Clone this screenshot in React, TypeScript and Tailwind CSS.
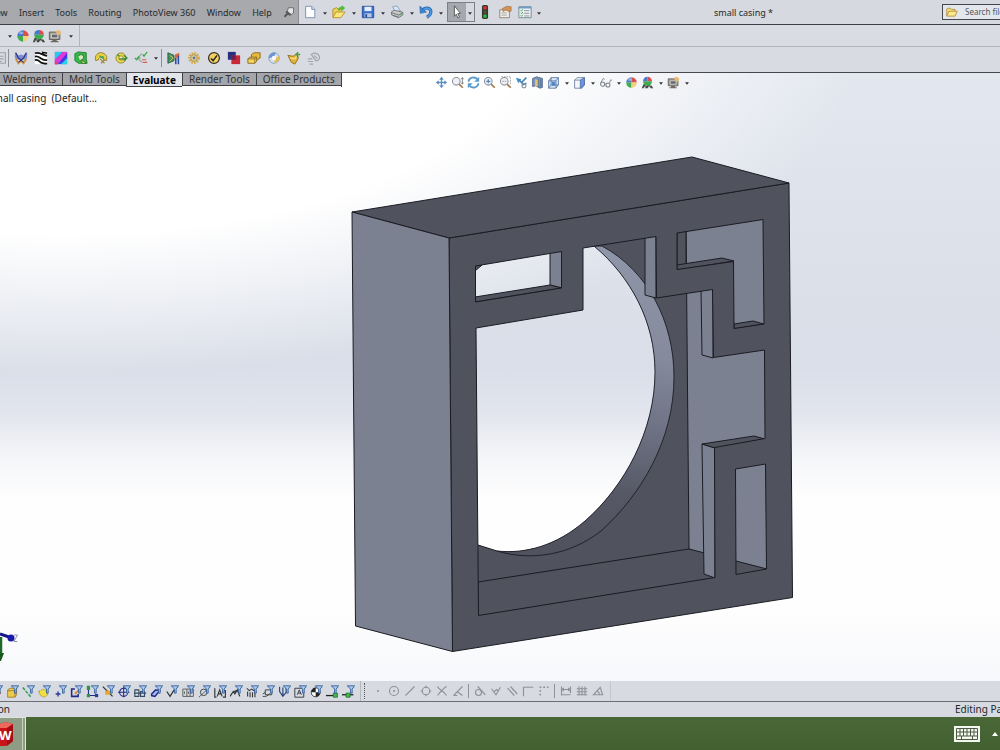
import React from 'react';
import clsx from 'clsx';

type Tool = { label: string; art: React.ReactNode };

const DARK = '#50525e';
const LIGHT = '#7c8192';
const EDGE = '#1b1c22';

const Glyph = ({ children, className = 'size-3.5' }: { children: React.ReactNode; className?: string }) => (
  <svg viewBox="0 0 16 16" className={clsx('block shrink-0', className)} fill="none" aria-hidden="true">
    {children}
  </svg>
);

const ToolButton = ({ label, art, className = 'w-4', size }: Tool & { className?: string; size?: string }) => (
  <button type="button" aria-label={label} className={clsx('flex h-4 shrink-0 items-center justify-center', className)}>
    <Glyph className={size}>{art}</Glyph>
  </button>
);

const Caret = ({ label, className = 'w-2.5' }: { label: string; className?: string }) => (
  <button type="button" aria-label={label} className={clsx('flex h-4 shrink-0 items-center justify-center', className)}>
    <svg viewBox="0 0 5 3" className="mt-0.5 h-[3px] w-1" aria-hidden="true">
      <path d="M0 0h5L2.5 3z" fill="#33353a" />
    </svg>
  </button>
);

const Divider = ({ className = 'h-4 bg-[#8d9095]' }: { className?: string }) => (
  <span className={clsx('w-px shrink-0', className)} />
);

/* ---------- icon drawings ---------- */

const ball = (
  <>
    <path d="M8 8V1.500A6.500 6.500 0 0 0 1.500 8z" fill="#4a78cc" />
    <path d="M8 8V1.500A6.500 6.500 0 0 1 14.500 8z" fill="#d94f50" />
    <path d="M8 8v6.500A6.500 6.500 0 0 1 1.500 8z" fill="#3eab50" />
    <path d="M8 8v6.500A6.500 6.500 0 0 0 14.500 8z" fill="#efd27c" />
    <ellipse cx="6" cy="4.500" rx="2.500" ry="1.600" fill="#fff" opacity=".4" />
  </>
);

const sceneBall = (
  <>
    <path d="M1 15l3-6h8l3 6z" fill="#d5d6d6" />
    <path d="M3 10h3l-1 2h2l1-2h2l1 2h2l2 3h-3l-1-2H9l-1 2H5l1-2H4l-1 2H1z" fill="#444" />
    <path d="M8 6.500V1a5.500 5.500 0 0 0-5.500 5.500z" fill="#4a78cc" />
    <path d="M8 6.500V1a5.500 5.500 0 0 1 5.500 5.500z" fill="#d94f50" />
    <path d="M2.500 6.500h11a5.500 5.500 0 0 1-11 0z" fill="#3eab50" />
  </>
);

const monitor = (
  <>
    <path d="M1.500 3.500h12v8.500h-12z" fill="#a3a29e" stroke="#5b5650" />
    <path d="M4 6h7v4H4z" fill="#666" stroke="#eee" strokeWidth=".7" />
    <path d="M3 14.500h9M5 13h5" stroke="#6f6a64" strokeWidth="1.400" />
    <path d="M8 2.500l4-1.500 3 2-1 4-3-1z" fill="#e9b873" />
  </>
);

const folder = (
  <>
    <path d="M1 13V4l1-1h4l1.500 1.500H12V7" fill="#f5dc79" stroke="#a8822c" />
    <path d="M1 13.500L4 7h11l-3 6.500z" fill="#fbe98f" stroke="#a8822c" />
  </>
);

const fileTools: Tool[] = [
  {
    label: 'New',
    art: (
      <>
        <path d="M3 1.500h7l3.500 3.500v9.500H3z" fill="#fdfeff" stroke="#7189ab" />
        <path d="M10 1.500V5h3.500" stroke="#7189ab" fill="#c9dbf2" />
      </>
    ),
  },
  {
    label: 'Open',
    art: (
      <>
        <path d="M1 14V5l4-2 2 1.500h4V7" fill="#f0cf55" stroke="#b58d2c" />
        <path d="M1 14.500L4.500 8H15l-5 6.500z" fill="#fbe77c" stroke="#b58d2c" />
        <path d="M7 6c0-3 2-4 4-4V0l4 3.500L11 7V4.500C9.500 4.500 9 5 8.500 7z" fill="#4dbb3d" />
      </>
    ),
  },
  {
    label: 'Save',
    art: (
      <>
        <path d="M1.500 1.500h13v13h-13z" fill="#3970cd" stroke="#234c9a" />
        <path d="M4 2h8v5H4z" fill="#e6eefb" />
        <path d="M4 9.500h8V14H4z" fill="#b9c9e3" />
        <path d="M5 10.500h2V14H5z" fill="#27488a" />
      </>
    ),
  },
  {
    label: 'Print',
    art: (
      <>
        <path d="M3 2l5-1 4 6-6 1z" fill="#d5e8fb" stroke="#7d8ea3" strokeWidth=".8" />
        <path d="M1.500 8L5 6l9 2 1 3-5 3.500-8-3z" fill="#c6c8c9" stroke="#5f6366" strokeWidth=".9" />
        <path d="M2 9l8 2.500 5-3M4 12l6 2" stroke="#6a6e71" />
        <path d="M11 11.500l2-1" stroke="#4aa64a" strokeWidth="1.400" />
      </>
    ),
  },
  {
    label: 'Undo',
    art: (
      <>
        <path d="M4 5.500c5-4 10-1.500 9.500 3-.4 3-2.500 4.500-4.500 5.500" stroke="#1d5ca8" strokeWidth="3.600" />
        <path d="M4 5.500c5-4 10-1.500 9.500 3-.4 3-2.500 4.500-4.500 5.500" stroke="#4f9be3" strokeWidth="2" />
        <path d="M1 1.500l.5 8 7-1.500z" fill="#3c86d4" stroke="#1d5ca8" strokeWidth=".7" />
      </>
    ),
  },
];

const pointerArt = (
  <path d="M5 1l7 8.500-3.200.3 2 4-1.800 1-1.900-4.200L5 13z" fill="#fff" stroke="#444" strokeWidth=".9" />
);

const trailingTools: Tool[] = [
  {
    label: 'Rebuild',
    art: (
      <>
        <rect x="4.500" y="0" width="7" height="16" rx="2" fill="#333a33" />
        <circle cx="8" cy="3.200" r="2.200" fill="#de3030" />
        <circle cx="8" cy="8" r="1.800" fill="#5c5430" />
        <circle cx="8" cy="12.700" r="2.200" fill="#2fb53c" />
      </>
    ),
  },
  {
    label: 'File properties',
    art: (
      <>
        <path d="M2 5.500h11v9H2z" fill="#f1eee9" stroke="#8b7e70" />
        <path d="M4 9h6M4 11.500h6" stroke="#9b9b9b" />
        <path d="M5 4l5-2.500 5 .5v5l-3 .500-3-2-3 2z" fill="#d29356" stroke="#8f5f34" strokeWidth=".6" />
      </>
    ),
  },
  {
    label: 'Options',
    art: (
      <>
        <path d="M1 2h14v12.500H1z" fill="#eef2f5" stroke="#6b8293" />
        <path d="M1 3h14" stroke="#6d9cc7" strokeWidth="2" />
        <path d="M7 6.500h6M7 9.500h6M7 12.500h6" stroke="#7b8790" />
        <path d="M3 6l1 1 1.500-2M3 9l1 1 1.500-2M3 12l1 1 1.500-2" stroke="#309645" />
      </>
    ),
  },
];

const evaluateTools: Tool[] = [
  {
    label: 'Measure',
    art: (
      <>
        <path d="M1 1l4 4 3-1 3 1 4-4v7l-3 2H4L1 8z" fill="#7f8ccf" />
        <path d="M2 9l3 5 3-3 3 3 3-5" stroke="#d48c35" strokeWidth="2" />
        <path d="M2 2l3 6 6 5M14 2l-3 6-6 5" stroke="#26307b" strokeWidth="1.300" />
      </>
    ),
  },
  {
    label: 'Zebra stripes',
    art: (
      <>
        <path d="M1 1h14v14H1z" fill="#fff" />
        <path
          d="M1 2.500c5-2 8 2 14 3M1 6.500c3-1 4 0 7 2s5 2 7 2M1 10.500c3-1 4 0 6 2s5 2 8 2M9 1.500c2 0 4 1 6 1"
          stroke="#111"
          strokeWidth="2"
        />
      </>
    ),
  },
  {
    label: 'Curvature',
    art: (
      <>
        <path d="M1 1h14v14H1z" fill="#2c54e6" />
        <path d="M1 1h9L1 10z" fill="#27c8ec" />
        <path d="M10 1h5v2L4 15H1v-5z" fill="#df38d8" />
        <path d="M15 2v7l-5 4-3-1z" fill="#4a35e8" />
        <path d="M15 8v7H8z" fill="#28d4e4" />
        <path d="M1 11v4h4z" fill="#ec3f54" />
      </>
    ),
  },
  {
    label: 'Draft analysis',
    art: (
      <>
        <path d="M1 3l4-2 9 1v7l1 5H5L1 11z" fill="#36b548" stroke="#1b7d31" />
        <path d="M5 6c2-3 6-2 6 1s-3 3-4 4" fill="#d9e7c0" stroke="#1d6e2c" />
        <path d="M9 10l5 4H9z" fill="#f0d94e" stroke="#237a33" />
      </>
    ),
  },
  {
    label: 'Undercut analysis',
    art: (
      <>
        <path d="M2 11C0 5 5 1 9 2s7 4 5 9l-3-1c0-3-5-5-6 0z" fill="#e9cf43" stroke="#8b7a22" />
        <path d="M5 5l6 1 1 4-4-2z" fill="#49a950" />
        <path d="M7 9l5 5M12 10l-4 4" stroke="#a48735" strokeWidth="1.300" />
      </>
    ),
  },
  {
    label: 'Parting line analysis',
    art: (
      <>
        <circle cx="8" cy="8" r="5.800" fill="#edd84b" stroke="#93832a" />
        <circle cx="8" cy="8" r="2.500" fill="#f8efa4" stroke="#93832a" />
        <path d="M6 9h6l3-1M11 5l4 3-4 3M4 4l2 2" stroke="#2c8743" strokeWidth="1.400" />
      </>
    ),
  },
  {
    label: 'Geometry check',
    art: (
      <>
        <path d="M9 3L4 8l5 5M3 8h5" stroke="#8fa296" strokeWidth="1.200" />
        <path d="M10 4l1.500 2L15 1M1 8l2 2 3-4" stroke="#3dac4b" strokeWidth="1.500" />
        <path d="M9 10h5M10 13h5" stroke="#cf6058" strokeWidth="1.300" />
      </>
    ),
  },
];

const analysisTools: Tool[] = [
  {
    label: 'Import diagnostics',
    art: (
      <>
        <path d="M1 2l7 3v6l-7 3z" fill="#3f8f60" stroke="#285c48" />
        <path d="M9 4l5-2v4l-5 3z" fill="#dc6a43" />
        <path d="M10 8v7M13 5v10" stroke="#2e4f9d" strokeWidth="1.800" />
        <path d="M3 5l4 3-4 4" stroke="#eccd4d" />
      </>
    ),
  },
  {
    label: 'Gear mates',
    art: (
      <>
        <circle cx="8" cy="8" r="5.500" stroke="#d9a93f" strokeWidth="2.500" strokeDasharray="2 1.200" />
        <circle cx="8" cy="8" r="3.800" fill="#e9d58c" stroke="#9b8344" />
        <circle cx="8" cy="8" r="1.700" fill="#5979b5" />
      </>
    ),
  },
  {
    label: 'Check',
    art: (
      <>
        <circle cx="8" cy="8" r="6.200" fill="#f3cf5f" stroke="#322e25" strokeWidth="1.400" />
        <path d="M4.500 8.500l2.500 2.500 4.500-6" stroke="#222" strokeWidth="1.700" />
      </>
    ),
  },
  {
    label: 'Compare documents',
    art: (
      <>
        <path d="M1 1h9v9H1z" fill="#26307f" />
        <path d="M5 5h10v10H5z" fill="#c7293a" />
        <path d="M5 5h5v5H5z" fill="#6e1d4c" />
      </>
    ),
  },
  {
    label: 'Mass properties',
    art: (
      <>
        <path d="M5 4l3-2h7v6l-3 2H5z" fill="#e8b93b" stroke="#86651c" />
        <path d="M1 9l2-2h8v5l-2 2H1z" fill="#f6d764" stroke="#86651c" />
        <path d="M1 9h8l2-2M9 9v5" stroke="#86651c" />
      </>
    ),
  },
  {
    label: 'Sensor',
    art: (
      <>
        <circle cx="8" cy="8" r="6" fill="#d6e1ec" stroke="#7f9bb9" />
        <path d="M2 8c0-4 4-7 8-6L8 7z" fill="#6b96d3" />
        <path d="M8 8l6-2c1 4-2 7-5 8z" fill="#e8bd54" />
        <circle cx="8" cy="8" r="2.500" fill="#f8fafc" />
      </>
    ),
  },
  {
    label: 'Statistics',
    art: (
      <>
        <path d="M1 5l6 1 4-3 2 5-4 7-4-2z" fill="#e5b334" stroke="#8d6a1b" />
        <path d="M4 8l5 1 2-3" stroke="#f9e48f" strokeWidth="1.500" />
        <path d="M12 1v6M9.500 4h5.500" stroke="#3da148" strokeWidth="1.600" />
      </>
    ),
  },
  {
    label: 'Deviation analysis',
    art: (
      <>
        <path d="M5 4c3-3 8-1 9 2s-1 6-4 5l-3-4z" stroke="#a3a5a8" strokeWidth="1.400" />
        <path d="M1 9h5M1 12h6M3 15h4M8 5l4 4" stroke="#a3a5a8" strokeWidth="1.300" />
      </>
    ),
  },
];

const lens = (extra: React.ReactNode) => (
  <>
    <circle cx="6.500" cy="6.500" r="4.700" fill="#edf1f5" stroke="#8b929a" strokeWidth="1.300" />
    <path d="M10 10l4.500 4.500" stroke="#a3774d" strokeWidth="2" />
    {extra}
  </>
);

const viewTools: (Tool & { menu?: boolean })[] = [
  {
    label: 'Pan',
    art: (
      <>
        <path d="M8 3v10M3 8h10" stroke="#5d8fbf" strokeWidth="1.600" />
        <path
          d="M8 1l2.800 3.500H5.200zM8 15l2.800-3.500H5.200zM1 8l3.500-2.800v5.600zM15 8l-3.500-2.800v5.600z"
          fill="#5d8fbf"
        />
      </>
    ),
  },
  {
    label: 'Zoom in and out',
    art: lens(<path d="M14 2v8M12.500 4L14 2l1.500 2M12.500 8l1.500 2 1.500-2" stroke="#6c7379" />),
  },
  {
    label: 'Rotate view',
    art: (
      <>
        <path d="M2 7c0-5 7-7 11-3M14 9c0 5-7 7-11 3" stroke="#5f9ccc" strokeWidth="2.200" />
        <path d="M15 1v6H9zM1 15V9h6z" fill="#5f9ccc" />
      </>
    ),
  },
  { label: 'Zoom to fit', art: lens(<path d="M6.500 4v5M4 6.500h5" stroke="#5587b8" strokeWidth="1.500" />) },
  { label: 'Zoom to area', art: lens(<path d="M3 1h11v10M4 6.500h5" stroke="#8b929a" strokeDasharray="2 1" />) },
  {
    label: 'Previous view',
    art: (
      <>
        <path d="M1 2l7 2-4 5z" fill="#4b93c8" />
        <path d="M4 4l6 6M8 8l6-6M9 11l5-2" stroke="#4784b7" strokeWidth="2" />
        <circle cx="11" cy="12" r="2.500" stroke="#8b929a" strokeWidth="1.300" />
      </>
    ),
  },
  {
    label: 'Section view',
    art: (
      <>
        <path d="M2 3l5-2 7 2v11l-3 1-5-3-4 1z" fill="#7894bb" stroke="#4b6288" />
        <path d="M5 4l4 1v8l-4-1z" fill="#e7c26c" />
        <path d="M9 4v10M12 4v10" stroke="#4e6892" />
      </>
    ),
  },
  {
    label: 'View orientation',
    menu: true,
    art: (
      <>
        <path d="M2 6l3-4h9v9l-3 4H2z" fill="#dce7f5" stroke="#4f6fa0" />
        <path d="M2 6h9v9M11 6l3-4M5 2v9h9M5 11l-3 4" stroke="#4f6fa0" />
        <path d="M6 7h4v5H6z" fill="#4f86c4" />
      </>
    ),
  },
  {
    label: 'Display style',
    menu: true,
    art: (
      <>
        <path d="M2 5l3-3h9v9l-3 4H2z" fill="#f3f6fb" stroke="#65799d" />
        <path d="M9 5l5-3v9l-5 4z" fill="#6d95dc" stroke="#4b69a5" />
        <path d="M2 5h7" stroke="#65799d" />
      </>
    ),
  },
  {
    label: 'Hide and show items',
    menu: true,
    art: (
      <>
        <circle cx="4.500" cy="10" r="2.500" stroke="#7e848a" strokeWidth="1.300" />
        <circle cx="11" cy="11" r="2.500" stroke="#7e848a" strokeWidth="1.300" />
        <path d="M2 9l3-6 2 1M13 9l1-4h2M7 10h1.500" stroke="#7e848a" strokeWidth="1.100" />
      </>
    ),
  },
  { label: 'Edit appearance', art: ball },
  { label: 'Apply scene', menu: true, art: sceneBall },
  { label: 'View settings', menu: true, art: monitor },
];

const filterTools: Tool[] = [
  { label: 'Filter faces', art: <path d="M8 6l5 5M8 13l5-4" stroke="#c65a33" strokeWidth="2" /> },
  {
    label: 'Filter solid bodies',
    art: (
      <>
        <path d="M2 6l3-2h8v8l-2 3H2z" fill="#efcb4c" stroke="#96782a" />
        <path d="M2 7h9v8M11 7l2-3" stroke="#96782a" />
      </>
    ),
  },
  { label: 'Filter axes', art: <path d="M1 3l10 12" stroke="#2e9a4b" strokeWidth="1.800" strokeDasharray="4 1.500" /> },
  {
    label: 'Filter planes',
    art: <path d="M1 8l5-3 5 2 1 5-4 3-5-2z" fill="#f0df3f" stroke="#99892b" strokeDasharray="2 1" />,
  },
  { label: 'Filter sketch points', art: <path d="M5 8v6M2 11h6" stroke="#2a3b9c" strokeWidth="1.700" /> },
  {
    label: 'Filter sketch segments',
    art: (
      <>
        <path d="M6 5H2v9h8v-3" stroke="#20298c" strokeWidth="1.900" />
        <path d="M6 11l5-5" stroke="#dc8a2d" strokeWidth="2.400" />
      </>
    ),
  },
  {
    label: 'Filter coordinate systems',
    art: (
      <>
        <path d="M3 2v11h10" stroke="#20298c" strokeWidth="1.300" />
        <path d="M1 1h4v5H1zM1 11h4v4H1z" fill="#2f9349" />
        <path d="M11 11h4v4h-4z" fill="#2a3b9c" />
      </>
    ),
  },
  {
    label: 'Filter midpoints',
    art: (
      <>
        <path d="M1 2l12 12" stroke="#333" strokeWidth="1.500" />
        <path d="M4 7h6v5H4z" fill="#e4a62b" />
      </>
    ),
  },
  {
    label: 'Filter center marks',
    art: (
      <>
        <circle cx="7" cy="9" r="5" stroke="#20298c" strokeWidth="1.300" />
        <path d="M7 2v13M0 9h14" stroke="#20298c" strokeWidth="1.300" />
      </>
    ),
  },
  { label: 'Filter centerlines', art: <path d="M1 6h5v8H1zM8 8h5v6H8zM0 10h15" stroke="#33495d" strokeWidth="1.300" /> },
  { label: 'Filter dimensions', art: <path d="M2 11l5-5 5 1-6 7-4-1z" fill="#a8bbec" stroke="#20298c" strokeWidth="1.800" /> },
  { label: 'Filter surface finish', art: <path d="M1 8l4 6 5-8" stroke="#333" strokeWidth="1.500" /> },
  { label: 'Filter geometric tolerances', art: <path d="M1 5h13v9H1zM6 5v9M10 5v9M3 8v3M8 8v3" stroke="#555" strokeWidth="1.100" /> },
  {
    label: 'Filter notes',
    art: (
      <>
        <circle cx="7" cy="9" r="4" stroke="#444" strokeWidth="1.200" />
        <path d="M1 15L12 5" stroke="#444" />
      </>
    ),
  },
  {
    label: 'Filter datum features',
    art: <path d="M1 4v11h2M12 7h2v8h-3M4 14l3-8 3 8M5 11h4" stroke="#333" strokeWidth="1.400" />,
  },
  { label: 'Filter weld symbols', art: <path d="M0 14l4-6 2 3 3-5 3 8M5 8l3-1" stroke="#333" strokeWidth="1.500" /> },
  { label: 'Filter weld beads', art: <path d="M1 4l3 3 3-2 6 4M2 8v6M5 9v6M8 9v6M11 9v6" stroke="#333" strokeWidth="1.300" /> },
  {
    label: 'Filter datum targets',
    art: (
      <>
        <path d="M4 6h8v6H4z" stroke="#444" strokeWidth="1.200" />
        <path d="M1 14c3 1 7-1 9-4M1 11l3-2" stroke="#444" strokeWidth="1.200" />
      </>
    ),
  },
  { label: 'Filter cosmetic threads', art: <path d="M2 2v6l4 6 4-5V3M6 3v10" stroke="#2a3f78" strokeWidth="1.400" /> },
  {
    label: 'Filter blocks',
    art: <path d="M1 4h11v11H1zM4 12l2.500-6L9 12M5 10h3" stroke="#3b4046" strokeWidth="1.200" />,
  },
  {
    label: 'Filter center of mass',
    art: (
      <>
        <circle cx="7" cy="9" r="5.500" fill="#fff" stroke="#222" />
        <path d="M7 9V3.500A5.500 5.500 0 0 0 1.500 9zM7 9v5.500A5.500 5.500 0 0 0 12.500 9z" fill="#222" />
      </>
    ),
  },
  {
    label: 'Filter connection points',
    art: (
      <>
        <path d="M0 13h9" stroke="#222" strokeWidth="1.600" />
        <path d="M9 10h5v5H9z" fill="#42b850" stroke="#1f6b2b" />
      </>
    ),
  },
  {
    label: 'Filter routing points',
    art: (
      <>
        <path d="M0 12h14" stroke="#222" strokeWidth="1.600" />
        <path d="M5 10h5v5H5z" fill="#42b850" stroke="#1f6b2b" />
      </>
    ),
  },
];

const Funnel = () => (
  <path d="M6.500 1h9L12.500 5v5h-2V5z" fill="#a9c9ec" stroke="#315f9c" strokeWidth="1.100" />
);

const g = { stroke: '#8f9296', strokeWidth: 1.5 };

const snapGroups: Tool[][] = [
  [
    { label: 'Point snap', art: <circle cx="8" cy="8" r="1.400" fill="#8f9296" /> },
    {
      label: 'Center point snap',
      art: (
        <>
          <circle cx="8" cy="8" r="6" {...g} />
          <circle cx="8" cy="8" r="1.400" fill="#8f9296" />
        </>
      ),
    },
    { label: 'Midpoint snap', art: <path d="M2 14L14 2" {...g} /> },
    {
      label: 'Quadrant snap',
      art: (
        <>
          <circle cx="8" cy="8" r="5" {...g} />
          <path d="M8 1v3M8 12v3M1 8h3M12 8h3" {...g} />
        </>
      ),
    },
    { label: 'Intersection snap', art: <path d="M2 2c2 5 8 5 12 12M14 2C9 5 6 9 2 14" {...g} /> },
    { label: 'Nearest snap', art: <path d="M2 14L14 2M7 9l7 5M2 14h5" {...g} /> },
  ],
  [
    {
      label: 'Tangent snap',
      art: (
        <>
          <circle cx="6" cy="10" r="4" {...g} />
          <path d="M5 2l10 11" {...g} />
        </>
      ),
    },
    { label: 'Perpendicular snap', art: <path d="M2 5l6 8 6-10M5 9l4-3 2 2" {...g} /> },
    { label: 'Parallel snap', art: <path d="M2 4l9 10M6 2l9 10" {...g} /> },
    { label: 'Horizontal and vertical snap', art: <path d="M2 15V3h13" {...g} /> },
    { label: 'Point alignment snap', art: <path d="M3 14V3h11" {...g} strokeWidth={2} strokeDasharray="2.500 2.500" /> },
  ],
  [
    { label: 'Length snap', art: <path d="M2 2v12M14 2v9M2 6h12M2 13h12M5 4L3 6l2 2M11 4l2 2-2 2" {...g} /> },
    { label: 'Grid snap', art: <path d="M4 2v12M8 2v12M12 2v12M1 5h14M1 9h14M1 13h14" {...g} /> },
    { label: 'Angle snap', art: <path d="M15 13H2L11 3l3 10M10 13c0-3-1-4-3-5" {...g} /> },
  ],
];

/* ---------- model ---------- */

const Casing = () => (
  <svg
    viewBox="0 73 1000 608"
    className="absolute inset-0 h-full w-full"
    fill="none"
    stroke={EDGE}
    strokeLinejoin="round"
    role="img"
    aria-label="Isometric view of the small casing part"
  >
    <defs>
      <linearGradient id="bore" x1="620" y1="246" x2="585" y2="550" gradientUnits="userSpaceOnUse">
        <stop offset="0" stopColor="#9096a9" />
        <stop offset=".35" stopColor="#858a9d" />
        <stop offset=".6" stopColor="#6c7082" />
        <stop offset=".8" stopColor="#565965" />
        <stop offset="1" stopColor={DARK} />
      </linearGradient>
    </defs>

    {/* rear wall, open where the bore passes through */}
    <path
      d="M594 246C631 277 655 322 655 372C655 430 625 486 585 521C556 546 525 554 497 551L478 545V616L689 580V225L594 240z"
      fill={DARK}
      stroke="none"
    />
    {/* bore */}
    <path
      d="M594 246C631 277 655 322 655 372C655 430 625 486 585 521C556 546 525 554 497 551C530 561 569 556 601 531C641 495 674 440 674 377C674 322 648 271 602 246z"
      fill="url(#bore)"
      strokeWidth=".9"
    />
    <path d="M497 551L478 545" />

    {/* right wall and floor */}
    <path d="M686 225L770 212V585L689 549z" fill={LIGHT} />
    <path d="M478 582L689 549L767 569L716 590L478 620z" fill={DARK} />

    {/* rib sides */}
    <g fill={LIGHT}>
      <path d="M645 236L656 234V298L645 295z" />
      <path d="M701 288L713 286V358L702 355z" />
      <path d="M702 444L715 448V578L704 574z" />
      <path d="M550 250L562 248V288L550 285z" />
    </g>
    <g fill={DARK}>
      <path d="M702 444L754 436L765 439L715 448z" />
      <path d="M677 228L686 227V266L677 268z" />
      <path d="M677 265L722 258L734 261L677 270z" />
      <path d="M734 324L753 321L764 324L734 329z" />
      <path d="M475 297L550 285L562 288L475 302z" />
      <path d="M475 265H482L475 271z" />
    </g>

    {/* front plate with its cut-outs */}
    <path
      fillRule="evenodd"
      fill={DARK}
      d="M449 238L789 183L792.500 597.500L452.500 651.500z
        M475.500 266L561.500 251.500V288L475.500 302z
        M476 328L583 310V248L656 236.500L656.500 298L712.500 289.500L713.500 357.500L764.500 350L765 438.500L714.500 447.500L715 577.500L478.500 615.500z
        M677 233L763 219.500L764 324L734 328.500L733.500 261.500L677 269.500z
        M735.500 469L765.500 464L766.500 569L736 574.500z"
    />
    <path d="M352 212L692 157L789 183L449 238z" fill={DARK} />
    <path d="M352 212L449 238L452.500 651.500L355.500 626z" fill={LIGHT} />

    {/* axis triad */}
    <path d="M0 634L12 638" stroke="#14148c" strokeWidth="3" />
    <circle cx="11" cy="638" r="3.500" fill="#1a1aa8" stroke="none" />
    <path d="M14 635h3.500l-3.500 6.500h3.500" stroke="#7c7c9c" strokeWidth=".8" />
    <path d="M1 637V654" stroke="#1c6a28" strokeWidth="2.500" />
    <path d="M0 653h4L1 661H0z" fill="#17591f" stroke="none" />
  </svg>
);

/* ---------- bars ---------- */

const menus = ['View', 'Insert', 'Tools', 'Routing', 'PhotoView 360', 'Window', 'Help'];
const tabs = ['Weldments', 'Mold Tools', 'Evaluate', 'Render Tools', 'Office Products'];

const MenuBar = () => (
  <header className="flex h-[25px] items-stretch overflow-hidden border-b border-[#3d3f45] bg-[#d6d9df]">
    <nav className="flex w-[299px] shrink-0 items-center justify-between overflow-hidden border-r border-[#8b8d91] bg-[#a7a9ac] pr-[3px] pt-0.5 text-[9px] text-[#26282c]">
      {menus.map((menu, i) => (
        <button key={menu} type="button" className={clsx('whitespace-nowrap', i === 0 && '-ml-3')}>
          {menu}
        </button>
      ))}
      <button type="button" aria-label="Pin menu">
        <Glyph className="size-3">
          <path d="M7 1h7v7l-3 2-5-4z" fill="#e5e6e8" stroke="#55575b" />
          <path d="M4 6l6 5M6 9l-4 4" stroke="#55575b" strokeWidth="2.500" />
        </Glyph>
      </button>
    </nav>

    <div className="flex items-center pl-[3px]">
      {fileTools.map((tool) => (
        <React.Fragment key={tool.label}>
          <ToolButton {...tool} />
          <Caret label={`${tool.label} menu`} className="w-[13px]" />
        </React.Fragment>
      ))}
      <div className="flex h-5 items-center border border-[#7c7f84]">
        <button type="button" aria-label="Select" className="flex h-full w-[18px] items-center justify-center bg-[#a5a8ad]">
          <Glyph className="size-3.5">{pointerArt}</Glyph>
        </button>
        <Caret label="Select menu" className="w-2" />
      </div>
      <div className="flex items-center gap-1 pl-0.5">
        {trailingTools.map((tool) => (
          <ToolButton key={tool.label} {...tool} />
        ))}
      </div>
      <Caret label="Options menu" className="w-3" />
    </div>

    <h1 className="flex flex-1 items-center justify-center pt-0.5 text-[9px] text-[#26282c]">small casing *</h1>

    <label className="flex h-4 w-[58px] shrink-0 items-center gap-[7px] self-center overflow-hidden border border-r-0 border-[#45474c] bg-[#e3e6eb] pl-[3px]">
      <Glyph className="size-3">{folder}</Glyph>
      <input
        type="search"
        aria-label="Search files and models"
        placeholder="Search files"
        className="w-12 shrink-0 bg-transparent text-[8px] text-[#26282c] outline-none placeholder:text-[#55585e]"
      />
    </label>
  </header>
);

const RenderBar = () => (
  <div className="flex h-[22px] items-center border-b border-[#b3b6b8] bg-[#d9dce2] pl-[5px]">
    <Caret label="More views" />
    <ToolButton label="Appearances" art={ball} />
    <ToolButton label="Scene" art={sceneBall} />
    <ToolButton label="Render preview" art={monitor} />
    <Caret label="Render menu" className="w-4" />
    <Divider className="h-full bg-[#b3b6b8]" />
  </div>
);

const EvaluateBar = () => (
  <div className="flex h-[26px] items-center overflow-hidden border-b border-[#45474d] bg-[#d8dbe1] pb-1">
    <ToolButton
      label="Equations"
      className="-ml-1.5"
      art={<path d="M2 2h11v12H2zM5 6h6M5 9h6M5 12h4" stroke="#a0a3a6" strokeWidth="1.300" />}
    />
    <Divider className="mr-0.5 h-[18px] bg-[#8d9095]" />
    {evaluateTools.map((tool) => (
      <ToolButton key={tool.label} {...tool} className="w-5" />
    ))}
    <Caret label="Check menu" />
    <Divider className="mr-0.5 h-[18px] bg-[#8d9095]" />
    {analysisTools.map((tool) => (
      <ToolButton key={tool.label} {...tool} className="w-5" />
    ))}
  </div>
);

const TabRow = () => (
  <div className="relative flex items-start">
    <div role="tablist" className="flex items-start border-r border-[#3f4146] text-[10px] leading-3 text-[#2f3136]">
      {tabs.map((tab) => {
        const active = tab === 'Evaluate';
        return (
          <button
            key={tab}
            type="button"
            role="tab"
            aria-selected={active}
            className={clsx(
              'whitespace-nowrap border-b border-l border-[#3f4146] px-1.5',
              active ? 'h-3.5 bg-[#e2e5ea] font-bold text-black' : 'h-[13px] bg-[#a4a6aa]',
              tab === 'Weldments' && '-ml-1',
            )}
          >
            {tab}
          </button>
        );
      })}
    </div>
    <div className="ml-[92px] flex items-center pt-px">
      {viewTools.map(({ menu, ...tool }) => (
        <React.Fragment key={tool.label}>
          <ToolButton {...tool} size="size-[13px]" />
          {menu && <Caret label={`${tool.label} menu`} />}
        </React.Fragment>
      ))}
    </div>
  </div>
);

const SelectionBar = () => (
  <div className="flex h-[21px] items-center overflow-hidden border-b border-[#6c6e73] bg-[#d7dae0]">
    <div className="-ml-3 flex">
      {filterTools.map(({ label, art }) => (
        <ToolButton
          key={label}
          label={label}
          size="size-[13px]"
          art={
            <>
              {art}
              <Funnel />
            </>
          }
        />
      ))}
    </div>
    <Divider className="ml-1 h-full bg-[#b5b8bc]" />
    <span className="ml-[3px] mr-1 h-4 w-px border-l border-dotted border-[#55575b]" />
    {snapGroups.map((group, i) => (
      <React.Fragment key={i}>
        {i > 0 && <Divider className="mx-0.5 h-3.5 bg-[#8f9296]" />}
        <div className="flex pl-px">
          {group.map((tool) => (
            <ToolButton key={tool.label} {...tool} size="size-3" />
          ))}
        </div>
      </React.Fragment>
    ))}
    <Divider className="ml-1 h-full bg-[#c3c6ca]" />
  </div>
);

const StatusBar = () => (
  <div className="flex h-[15px] items-center justify-between overflow-hidden bg-[#d7dae0] text-[10px] leading-[15px] text-[#24262a]">
    <span className="flex w-2.5 justify-end overflow-hidden">Edition</span>
    <span className="w-[45px] overflow-hidden whitespace-nowrap">Editing Part</span>
  </div>
);

const Taskbar = () => (
  <footer className="flex h-[33px] items-center justify-between bg-linear-to-b from-[#496737] to-[#426030]">
    <button
      type="button"
      aria-label="SolidWorks"
      className="flex h-full w-[26px] items-center overflow-hidden border-r border-t border-[#dfe5d8] bg-[#8f9c84]"
    >
      <svg viewBox="0 0 13 24" className="h-6 w-[13px]" aria-hidden="true">
        <path d="M0 2L5 0l8 2v17l-7 5H0z" fill="#c9141a" />
        <path d="M0 2L5 0l8 2-6 4H0z" fill="#ef6a5e" />
        <path d="M7 6l6-4v17l-6 5z" fill="#a30d13" />
        <text x="-1" y="18" fontSize="13" fontWeight="700" fill="#fff" fontFamily="Noto Sans, sans-serif">
          W
        </text>
      </svg>
      <span className="ml-auto mr-0.5 h-full w-px bg-[#c8d0bf]" />
    </button>
    <div className="flex items-center gap-3">
      <button type="button" aria-label="Touch keyboard">
        <svg viewBox="0 0 26 16" className="h-4 w-[26px]" fill="none" aria-hidden="true">
          <path d="M0 0h26v16H0z" fill="#f4f6f0" />
          <path
            d="M2.500 2.500h21v11h-21zM2.500 6h21M2.500 10h21M6 2.500V10M9.500 2.500V10M13 2.500V10M16.500 2.500V10M20 2.500V10M7.500 10v3.500M18.500 10v3.500"
            stroke="#4c5a42"
          />
        </svg>
      </button>
      <button type="button" aria-label="Show hidden icons" className="pr-0.5">
        <svg viewBox="0 0 6 4" className="h-1 w-1.5" aria-hidden="true">
          <path d="M0 4l3-4 3 4z" fill="#fff" />
        </svg>
      </button>
    </div>
  </footer>
);

export default function App() {
  return (
    <div className="flex min-h-screen flex-col overflow-hidden font-['Noto_Sans',sans-serif]">
      <MenuBar />
      <RenderBar />
      <EvaluateBar />
      <main className="relative flex-1 bg-[radial-gradient(ellipse_80%_56%_at_6%_-6%,#fff_58%,#fff0_100%),linear-gradient(to_bottom,#e3e7ef_0%,#dce1ea_30%,#dadee8_48%,#e2e5ee_56%,#f4f5f8_63%,#fefefe_70%,#fefefe_88%,#f7f8fb_100%)]">
        <Casing />
        <TabRow />
        <p className="relative flex w-[97px] justify-end overflow-hidden whitespace-pre text-[10px] leading-4 text-[#222]">
          {'small casing  (Default...'}
        </p>
      </main>
      <SelectionBar />
      <StatusBar />
      <Taskbar />
    </div>
  );
}
